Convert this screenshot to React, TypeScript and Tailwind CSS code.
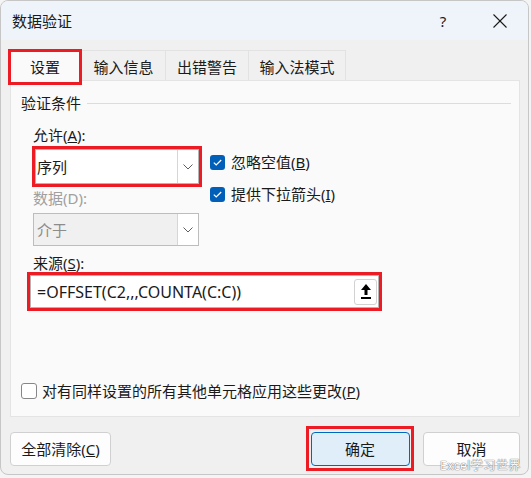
import React from "react";

const font = "font-['Segoe_UI','Noto_Sans','Noto_Sans_CJK_SC',sans-serif]";

function Chevron() {
  return (
    <svg width="10" height="6" viewBox="0 0 10 6" fill="none" stroke="#5f5f5f" strokeWidth="1">
      <polyline points="0.5,0.5 5,5 9.5,0.5" />
    </svg>
  );
}

function Checked() {
  return (
    <div className="flex h-[15px] w-[15px] items-center justify-center rounded-[3px] bg-[#005fb8]">
      <svg width="9" height="7" viewBox="0 0 9 7" fill="none" stroke="white" strokeWidth="1.2">
        <polyline points="0.8,3.6 3.2,6 8.2,1" />
      </svg>
    </div>
  );
}

export default function App() {
  return (
    <div className={`relative h-[478px] w-[531px] bg-[#f4f4f4] text-[15px] text-[#1a1a1a] ${font}`}>
      <div className="flex h-[475px] w-[529px] flex-col overflow-hidden rounded-[8px] border border-[#c6c6c6] bg-[#f0f0f0]">
        {/* Title bar */}
        <div className="flex h-[39px] shrink-0 items-center bg-[#eef4f9] pl-[11px] leading-[20px]">
          <span>数据验证</span>
          <span className="ml-auto w-[20px] text-center">?</span>
          <svg className="ml-[40px] mr-[21px]" width="14" height="14" viewBox="0 0 14 14" stroke="#1a1a1a" strokeWidth="1.1">
            <line x1="0.5" y1="0.5" x2="13.5" y2="13.5" />
            <line x1="13.5" y1="0.5" x2="0.5" y2="13.5" />
          </svg>
        </div>

        {/* Tabs */}
        <div className="mt-[10px] flex h-[30px] shrink-0 items-start pl-[7px] leading-[20px]">
          <div className="relative z-10 -mt-[1px] flex h-[36px] w-[74px] items-center justify-center border-[3px] border-[#ed1c24] bg-[#fafafa]">
            设置
          </div>
          <div className="flex h-[30px] w-[84px] items-center justify-center border border-b-0 border-l-0 border-[#e2e2e2] pt-[3px]">
            输入信息
          </div>
          <div className="flex h-[30px] w-[83px] items-center justify-center border border-b-0 border-l-0 border-[#e2e2e2] pt-[3px]">
            出错警告
          </div>
          <div className="flex h-[30px] w-[97px] items-center justify-center border border-b-0 border-l-0 border-[#e2e2e2] pt-[3px]">
            输入法模式
          </div>
        </div>

        {/* Panel */}
        <div className="ml-[9px] flex h-[337px] w-[510px] shrink-0 flex-col border border-[#e4e4e4] bg-[#fafafa] leading-[20px]">
          <div className="mt-[12px] flex items-center pl-[10px]">
            <span>验证条件</span>
            <div className="ml-[6px] mr-[8px] h-px flex-1 bg-[#dcdcdc]" />
          </div>

          <div className="flex flex-col pl-[22px]">
            <div className="mt-[12px] h-[20px]">
              允许(<span className="underline">A</span>):
            </div>

            <div className="mt-[1px] flex items-start">
              <div className="flex flex-col">
                <div className="-ml-[1px] h-[41px] w-[170px] border-[3px] border-[#ed1c24]">
                  <div className="flex h-full w-full items-center border border-[#b4b4b4] bg-white">
                    <span className="flex-1 pl-[1px]">序列</span>
                    <div className="flex h-full w-[21px] items-center justify-center border-l border-[#d6d6d6]">
                      <Chevron />
                    </div>
                  </div>
                </div>
                <div className="mt-[1px] h-[20px] text-[#a0a0a0]">数据(D):</div>
                <div className="mt-[5px] flex h-[33px] w-[166px] items-center border border-[#bdbdbd] bg-[#f0f0f0]">
                  <span className="flex-1 pl-[3px] text-[#8c8c8c]">介于</span>
                  <div className="flex h-full w-[21px] items-center justify-center border-l border-[#d6d6d6] bg-white">
                    <Chevron />
                  </div>
                </div>
              </div>

              <div className="ml-[8px] flex flex-col">
                <div className="mt-[6px] flex h-[20px] items-center">
                  <Checked />
                  <span className="ml-[6px]">
                    忽略空值(<span className="underline">B</span>)
                  </span>
                </div>
                <div className="mt-[12px] flex h-[20px] items-center">
                  <Checked />
                  <span className="ml-[6px]">
                    提供下拉箭头(<span className="underline">I</span>)
                  </span>
                </div>
              </div>
            </div>

            <div className="mt-[7px] h-[20px]">
              来源(<span className="underline">S</span>):
            </div>

            <div className="-ml-[6px] -mt-[1px] h-[39px] w-[355px] border-[3px] border-[#ed1c24]">
              <div className="flex h-full w-full items-center border border-[#b4b4b4] bg-white pr-[1px]">
                <span className="flex-1 pl-[6px] text-[16px]">=OFFSET(C2,,,COUNTA(C:C))</span>
                <div className="flex h-[26px] w-[23px] items-center justify-center rounded-[3px] border border-[#d2d2d2] bg-white">
                  <svg width="10" height="15" viewBox="0 0 10 15" fill="#000">
                    <polygon points="5,0 10,6 6.5,6 6.5,11 3.5,11 3.5,6 0,6" />
                    <rect x="0" y="13" width="10" height="2" />
                  </svg>
                </div>
              </div>
            </div>

            <div className="-ml-[12px] mt-[70px] flex h-[20px] items-center">
              <div className="h-[16px] w-[16px] rounded-[3px] border border-[#878787] bg-white" />
              <span className="ml-[5px]">
                对有同样设置的所有其他单元格应用这些更改(<span className="underline">P</span>)
              </span>
            </div>
          </div>
        </div>

        {/* Footer */}
        <div className="mt-[9px] flex h-[45px] items-center leading-[20px]">
          <button className="ml-[9px] h-[34px] w-[101px] rounded-[4px] border border-[#d0d0d0] bg-[#fdfdfd]">
            全部清除(<span className="underline">C</span>)
          </button>
          <div className="ml-[195px] flex h-[45px] w-[108px] items-center justify-center border-[3px] border-[#ed1c24]">
            <button className="h-[34px] w-[99px] rounded-[4px] border border-[#0067c0] bg-[#e0eefa]">确定</button>
          </div>
          <button className="ml-[9px] h-[34px] w-[97px] rounded-[4px] border border-[#d0d0d0] bg-[#fdfdfd] leading-[16px]">取消</button>
        </div>
      </div>

      {/* Watermark */}
      <div className="absolute left-[440px] top-[460px] text-[12px] leading-[11px] tracking-[0.5px] text-white [text-shadow:0_0_1px_#666,0_0_1px_#666]">
        Excel学习世界
      </div>
    </div>
  );
}
